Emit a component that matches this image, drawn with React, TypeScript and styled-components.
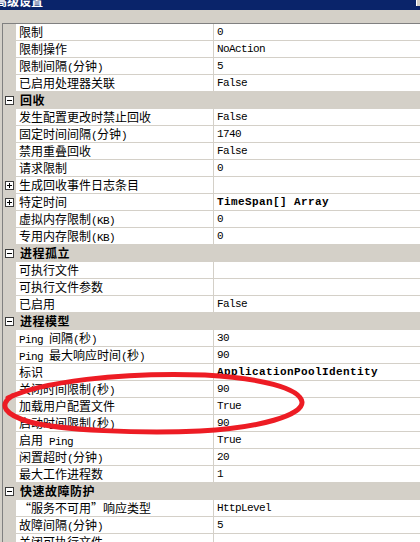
import React from "react";
import styled, { createGlobalStyle } from "styled-components";

// One line of the property grid: either a category header or a name/value pair
interface GridRow {
  name: string;
  value?: string;
  category?: boolean;
  expand?: boolean; // has a collapsed child list (+ box in the gutter)
  bold?: boolean; // value differs from the default
}

const rows: GridRow[] = [
  { name: "限制", value: "0" },
  { name: "限制操作", value: "NoAction" },
  { name: "限制间隔(分钟)", value: "5" },
  { name: "已启用处理器关联", value: "False" },
  { name: "回收", category: true },
  { name: "发生配置更改时禁止回收", value: "False" },
  { name: "固定时间间隔(分钟)", value: "1740" },
  { name: "禁用重叠回收", value: "False" },
  { name: "请求限制", value: "0" },
  { name: "生成回收事件日志条目", value: "", expand: true },
  { name: "特定时间", value: "TimeSpan[] Array", expand: true, bold: true },
  { name: "虚拟内存限制(KB)", value: "0" },
  { name: "专用内存限制(KB)", value: "0" },
  { name: "进程孤立", category: true },
  { name: "可执行文件", value: "" },
  { name: "可执行文件参数", value: "" },
  { name: "已启用", value: "False" },
  { name: "进程模型", category: true },
  { name: "Ping 间隔(秒)", value: "30" },
  { name: "Ping 最大响应时间(秒)", value: "90" },
  { name: "标识", value: "ApplicationPoolIdentity", bold: true },
  { name: "关闭时间限制(秒)", value: "90" },
  { name: "加载用户配置文件", value: "True" },
  { name: "启动时间限制(秒)", value: "90" },
  { name: "启用 Ping", value: "True" },
  { name: "闲置超时(分钟)", value: "20" },
  { name: "最大工作进程数", value: "1" },
  { name: "快速故障防护", category: true },
  { name: "“服务不可用”响应类型", value: "HttpLevel" },
  { name: "故障间隔(分钟)", value: "5" },
  { name: "关闭可执行文件", value: "" },
];

const GlobalStyle = createGlobalStyle`
  html, body {
    margin: 0;
    padding: 0;
    overflow: hidden;
    background: #d4d0c8;
  }
`;

const Window = styled.div`
  position: relative;
  width: 420px;
  height: 542px;
  overflow: hidden;
  background: #d4d0c8;
  font-family: "Noto Sans CJK SC", sans-serif;
  font-size: 12px;
  color: #000;
`;

const TitleBar = styled.div`
  display: flex;
  height: 10px;
  overflow: hidden;
  background: #0a246a;
`;

const TitleText = styled.span`
  flex: 1;
  margin: -5px 0 0 -5px;
  color: #fff;
  font-weight: bold;
  font-size: 12px;
  line-height: 12px;
  white-space: nowrap;
`;

const TitleButton = styled.div`
  width: 3px;
  height: 6px;
  background: #d4d0c8;
  border-left: 1px solid #fff;
`;

const Band = styled.div`
  height: 13px;
  background: #d4d0c8;
`;

const Grid = styled.div`
  margin-left: 2px;
  border-top: 1px solid #808080;
  border-left: 1px solid #808080;
  background: #fff;
`;

const Row = styled.div<{ $category?: boolean }>`
  display: flex;
  height: 17px;
  background: ${(p) => (p.$category ? "#d4d0c8" : "#fff")};
`;

const Gutter = styled.div`
  flex: none;
  display: flex;
  align-items: center;
  width: 13px;
  padding-left: 2px;
  box-sizing: border-box;
  background: #d4d0c8;
`;

const Name = styled.div`
  flex: none;
  width: 198px;
  box-sizing: border-box;
  padding-left: 3px;
  border-right: 1px solid #d4d0c8;
  border-bottom: 1px solid #d4d0c8;
  line-height: 16px;
  white-space: nowrap;
  overflow: hidden;
  font-feature-settings: "fwid";
`;

const Value = styled.div<{ $bold?: boolean }>`
  flex: 1;
  padding-left: 3px;
  border-bottom: 1px solid #d4d0c8;
  font-family: "Liberation Mono", monospace;
  font-size: 11px;
  font-weight: ${(p) => (p.$bold ? "bold" : "normal")};
  letter-spacing: ${(p) => (p.$bold ? "0.4px" : "-0.6px")};
  line-height: 16px;
  white-space: pre;
  overflow: hidden;
`;

const CategoryLabel = styled.div`
  flex: 1;
  padding-left: 4px;
  font-weight: bold;
  letter-spacing: 0.5px;
  line-height: 16px;
  border-bottom: 1px solid #d4d0c8;
`;

const Latin = styled.span`
  font-family: "Liberation Mono", monospace;
  font-size: 11px;
  letter-spacing: -0.6px;
`;

const Annotation = styled.svg`
  position: absolute;
  top: 0;
  left: 0;
  pointer-events: none;
`;

// ascii runs get the narrow fixed-width face, like SimSun's half-width glyphs
const Mixed = ({ text }: { text: string }) => {
  const parts = text.match(/[\x20-\x7e]+|[^\x20-\x7e]+/g) || [];
  return (
    <>
      {parts.map((part, i) =>
        /^[\x20-\x7e]+$/.test(part) ? <Latin key={i}>{part}</Latin> : <span key={i}>{part}</span>
      )}
    </>
  );
};

const Expander = ({ open }: { open: boolean }) => (
  <svg width="9" height="9" viewBox="0 0 9 9" shapeRendering="crispEdges">
    <rect x="0.5" y="0.5" width="8" height="8" fill="#fff" stroke="#3c3c3c" />
    <line x1="2" y1="4.5" x2="7" y2="4.5" stroke="#000" />
    {!open && <line x1="4.5" y1="2" x2="4.5" y2="7" stroke="#000" />}
  </svg>
);

const App: React.FC = () => {
  return (
    <Window>
      <GlobalStyle />
      <TitleBar>
        <TitleText>高级设置</TitleText>
        <TitleButton />
      </TitleBar>
      <Band />
      <Grid>
        {rows.map((row, i) =>
          row.category ? (
            <Row key={i} $category>
              <Gutter>
                <Expander open />
              </Gutter>
              <CategoryLabel>{row.name}</CategoryLabel>
            </Row>
          ) : (
            <Row key={i}>
              <Gutter>{row.expand && <Expander open={false} />}</Gutter>
              <Name>
                <Mixed text={row.name} />
              </Name>
              <Value $bold={row.bold}>{row.value}</Value>
            </Row>
          )
        )}
      </Grid>
      <Annotation width="420" height="542">
        <path
          d="M 8 398 C 40 382, 120 372, 205 375 C 260 378, 300 388, 302 402 C 303 415, 260 428, 200 431 C 140 434, 60 430, 30 422 C 5 415, -2 405, 12 396"
          fill="none"
          stroke="#ed1c24"
          strokeWidth="5"
          strokeLinecap="round"
        />
      </Annotation>
    </Window>
  );
};

export default App;
